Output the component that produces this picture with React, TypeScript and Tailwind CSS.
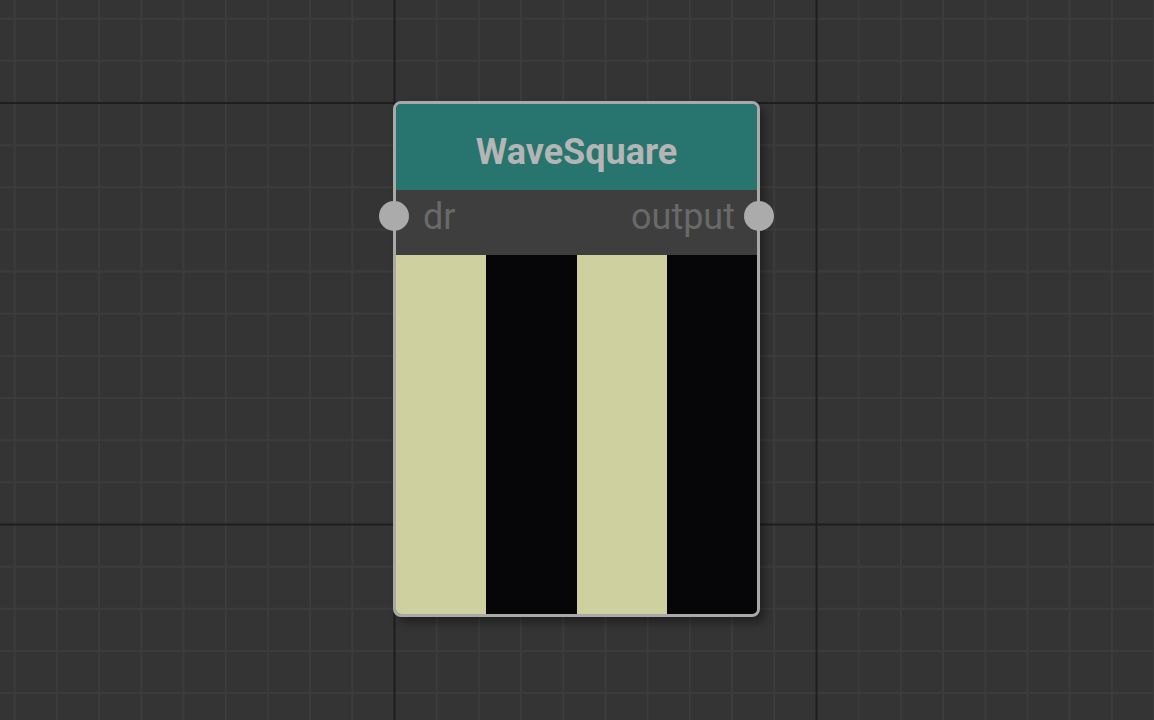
const MINOR = 42.2;

function GridBackground() {
  const xs: { p: number; major: boolean }[] = [];
  const ys: { p: number; major: boolean }[] = [];
  for (let i = -10; i <= 20; i++) {
    xs.push({ p: 394.5 + MINOR * i, major: i % 10 === 0 });
    ys.push({ p: 103 + 42.15 * i, major: i % 10 === 0 });
  }
  const minor = '#3c3c3c';
  const major = '#1e1e1e';
  return (
    <svg className="absolute inset-0" width="1154" height="720">
      {xs.filter((l) => !l.major).map((l) => (
        <line key={'vx' + l.p} x1={l.p} x2={l.p} y1={0} y2={720} stroke={minor} strokeWidth={2} />
      ))}
      {ys.filter((l) => !l.major).map((l) => (
        <line key={'hy' + l.p} y1={l.p} y2={l.p} x1={0} x2={1154} stroke={minor} strokeWidth={2} />
      ))}
      {xs.filter((l) => l.major).map((l) => (
        <line key={'VX' + l.p} x1={l.p} x2={l.p} y1={0} y2={720} stroke={major} strokeWidth={2} />
      ))}
      {ys.filter((l) => l.major).map((l) => (
        <line key={'HY' + l.p} y1={l.p} y2={l.p} x1={0} x2={1154} stroke={major} strokeWidth={2} />
      ))}
    </svg>
  );
}

export default function App() {
  return (
    <div className="relative w-[1154px] h-[720px] overflow-hidden bg-[#343434] font-['Roboto',sans-serif]">
      <GridBackground />

      {/* node */}
      <div className="absolute left-[393px] top-[101px] w-[367px] rounded-[8px] border-[3px] border-[#a9a9a9] bg-[#3e3e3e] shadow-[5px_6px_8px_rgba(0,0,0,0.35)]">
        <div className="h-[86px] rounded-t-[5px] bg-[#27756e] flex items-center justify-center pt-[10px]">
          <span className="text-[36px] font-bold text-[#b5b5b5] leading-none">WaveSquare</span>
        </div>

        <div className="relative h-[65px] flex items-center justify-between pl-[27px] pr-[22px] pb-[12px] text-[36px] text-[#696969] leading-none">
          <span>dr</span>
          <span>output</span>
          <div className="absolute left-[-17px] top-[11px] w-[30px] h-[30px] rounded-full bg-[#ababab]" />
          <div className="absolute right-[-17px] top-[11px] w-[30px] h-[30px] rounded-full bg-[#ababab]" />
        </div>

        <div className="flex h-[359px] rounded-b-[5px] overflow-hidden">
          <div className="flex-1 bg-[#ced09f]" />
          <div className="flex-1 bg-[#060608]" />
          <div className="flex-1 bg-[#ced09f]" />
          <div className="flex-1 bg-[#060608]" />
        </div>
      </div>
    </div>
  );
}
